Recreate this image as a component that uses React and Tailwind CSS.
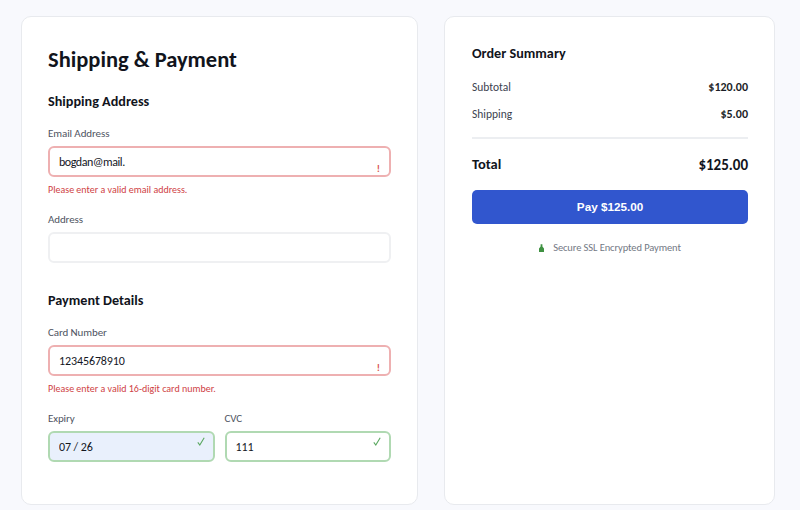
const FONT = "font-['Carlito','Lato','Noto_Sans',sans-serif]";

function Field({ label, value = "", state = "none", error, filled = false, tight = false }) {
  const border =
    state === "error"
      ? "border-[#eeb0b1]"
      : state === "ok"
      ? "border-[#b0d9b2]"
      : "border-[#eff0f2]";
  return (
    <div className="flex flex-col">
      <label className="text-[11px] tracking-[-0.1px] leading-[14px] text-[#4f5562] mb-[5px]">{label}</label>
      <div className="relative">
        <input
          readOnly
          value={value}
          className={`block w-full h-[31px] rounded-[6px] border-2 ${border} ${filled ? "bg-[#e9f0fc]" : "bg-white"} pl-[9px] pr-8 text-[12px] ${tight ? "tracking-[-0.45px]" : "tracking-[-0.1px]"} text-[#14171f] outline-none`}
        />
        {state === "error" && (
          <span className="absolute right-[11px] bottom-[2px] text-[10px] leading-[12px] font-bold text-[#d9534f]">!</span>
        )}
        {state === "ok" && (
          <span className="absolute right-[10px] top-[6px]">
            <svg width="8" height="9" viewBox="0 0 8 9" fill="none">
              <path d="M0.8 5.4 L2.8 8 L7.2 0.8" stroke="#5aa860" strokeWidth="1.1" />
            </svg>
          </span>
        )}
      </div>
      {error && <p className="mt-[6px] text-[10px] leading-[13px] text-[#cf3f45]">{error}</p>}
    </div>
  );
}

function Row({ label, value }) {
  return (
    <div className="flex justify-between items-center h-[14px]">
      <span className="text-[11.5px] text-[#3d4350]">{label}</span>
      <span className="text-[12px] leading-[13px] mb-[1px] font-semibold text-[#1b1e26]">{value}</span>
    </div>
  );
}

export default function App() {
  return (
    <div className={`${FONT} w-[800px] h-[510px] overflow-hidden bg-[#f8f9fd] pt-4 pl-[21px] flex gap-[26px] items-start`}>
      <div className="w-[397px] h-[489px] shrink-0 bg-white border border-[#e8eaee] rounded-[10px] px-[26px] pt-[28px]">
        <h1 className="text-[22.5px] leading-[30px] font-semibold text-[#11141c]">Shipping &amp; Payment</h1>
        <h2 className="mt-[17px] text-[14.2px] leading-[18px] font-semibold text-[#11141c]">Shipping Address</h2>
        <div className="mt-[17px]">
          <Field label="Email Address" value="bogdan@mail." state="error" tight error="Please enter a valid email address." />
        </div>
        <div className="mt-[17px]">
          <Field label="Address" />
        </div>
        <h2 className="mt-[28px] text-[14.2px] leading-[18px] font-semibold text-[#11141c]">Payment Details</h2>
        <div className="mt-[17px]">
          <Field label="Card Number" value="12345678910" state="error" error="Please enter a valid 16-digit card number." />
        </div>
        <div className="mt-[17px] grid grid-cols-2 gap-[10px]">
          <Field label="Expiry" value="07 / 26" state="ok" filled />
          <Field label="CVC" value="111" state="ok" />
        </div>
      </div>
      <div className="w-[331px] h-[489px] shrink-0 bg-white border border-[#e8eaee] rounded-[10px] pl-[27px] pr-[26px] pt-[27px]">
        <h2 className="text-[14.2px] leading-[18px] font-semibold text-[#11141c]">Order Summary</h2>
        <div className="mt-[19px] flex flex-col gap-[13px]">
          <Row label="Subtotal" value="$120.00" />
          <Row label="Shipping" value="$5.00" />
        </div>
        <div className="mt-[15px] h-[2px] bg-[#eceef1]" />
        <div className="mt-[17px] flex justify-between items-center h-[18px] font-semibold text-[#11141c]">
          <span className="text-[14.5px]">Total</span>
          <span className="text-[15px]">$125.00</span>
        </div>
        <button className="mt-[16px] w-full h-[34px] rounded-[5px] bg-[#3156ce] text-white text-[11.7px] font-bold font-['Liberation_Sans',sans-serif]">
          Pay $125.00
        </button>
        <div className="mt-[17px] flex justify-center items-center gap-[9px] text-[10.5px] tracking-[-0.1px] leading-[14px] text-[#737985]">
          <svg width="5" height="8" viewBox="0 0 5 8">
            <path d="M1.6 0.3 H3.4 V2.4 L5 4.4 V8 H0 V4.4 L1.6 2.4 Z" fill="#3f9142" />
          </svg>
          <span>Secure SSL Encrypted Payment</span>
        </div>
      </div>
    </div>
  );
}
